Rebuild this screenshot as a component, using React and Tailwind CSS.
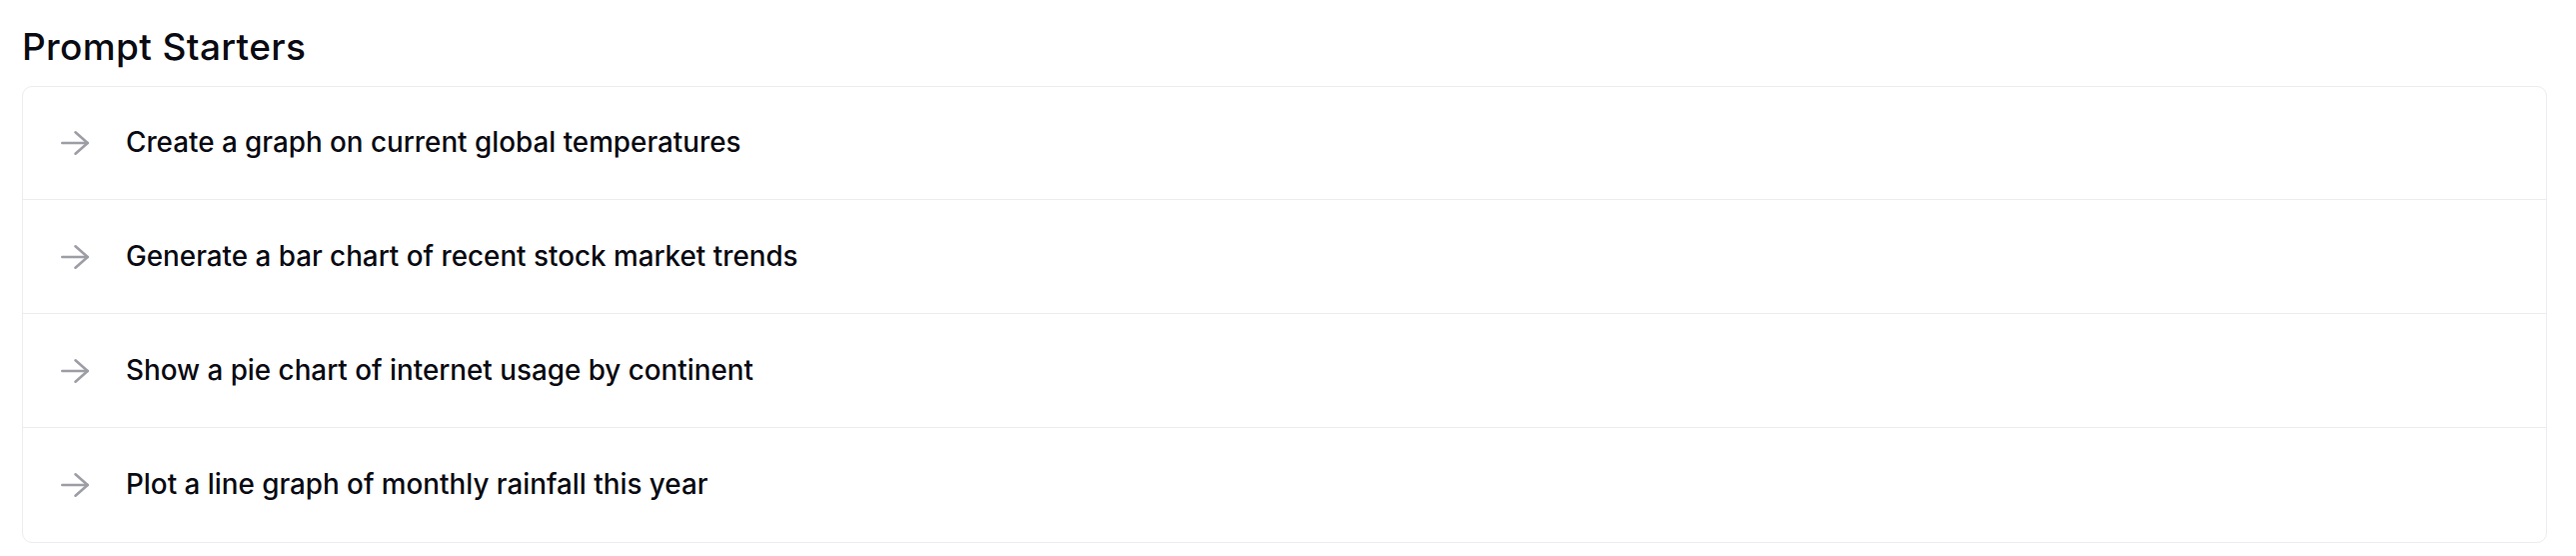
import React from "react";

const starters = [
  "Create a graph on current global temperatures",
  "Generate a bar chart of recent stock market trends",
  "Show a pie chart of internet usage by continent",
  "Plot a line graph of monthly rainfall this year",
];

function Arrow() {
  return (
    <svg
      width="28"
      height="24"
      viewBox="0 0 28 24"
      fill="none"
      stroke="currentColor"
      strokeWidth="2.6"
      strokeLinecap="round"
      strokeLinejoin="round"
      className="shrink-0 text-[#9d9da6] overflow-visible"
    >
      <path d="M1.3 12H26.7" />
      <path d="M14.5 1.3 26.7 12 14.5 22.7" />
    </svg>
  );
}

export default function App() {
  return (
    <div className="min-h-screen bg-white pt-[28px] font-['Inter',sans-serif] text-[#0a0a12]">
      <h2 className="pl-[22px] text-[37px] font-medium leading-none tracking-[0.01em]">
        Prompt Starters
      </h2>
      <div className="mt-[21px] ml-[22px] mr-[29px] rounded-[10px] border border-[#ececf0] divide-y divide-[#ececf0]">
        {starters.map((s, i) => (
          <div
            key={s}
            className={
              "flex items-center gap-[37px] pl-[38px] cursor-pointer " +
              (i === 0 ? "h-[113px]" : "h-[114px]")
            }
          >
            <Arrow />
            <span className="text-[27.8px] font-medium leading-none">{s}</span>
          </div>
        ))}
      </div>
    </div>
  );
}
